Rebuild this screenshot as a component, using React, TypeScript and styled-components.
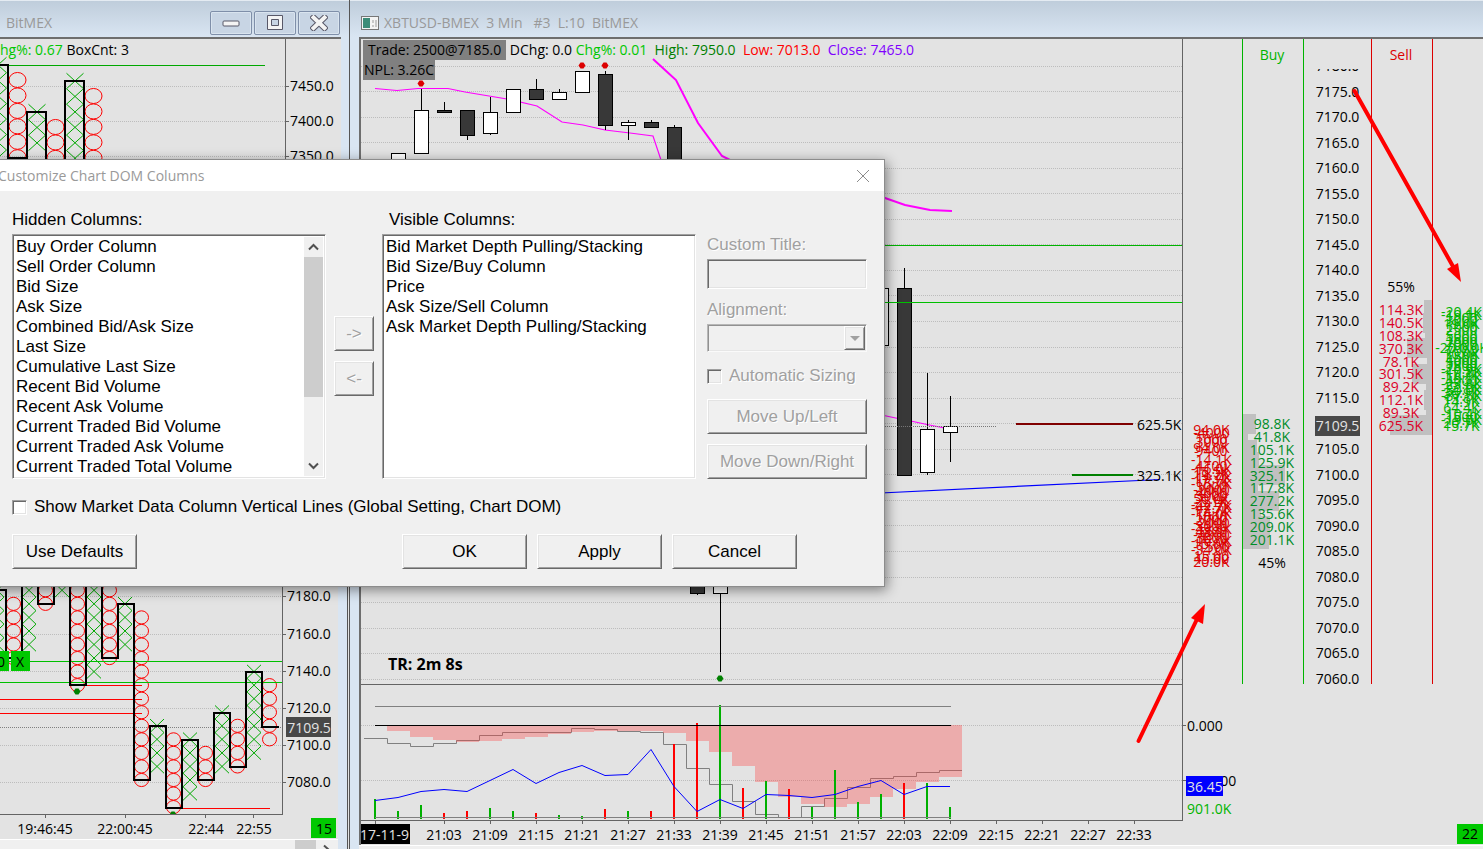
import React from "react";
import styled, { createGlobalStyle, css } from "styled-components";

const UI = `"Open Sans", "Noto Sans", sans-serif`;
const CLASSIC = `"Liberation Sans", Arial, sans-serif`;

const GlobalStyle = createGlobalStyle`
  *, *::before, *::after { box-sizing: border-box; }
  body { margin: 0; background: #e3e3e3; font-family: ${UI}; font-size: 14px; color: #000; }
  ul { list-style: none; margin: 0; padding: 0; }
`;

/* ---------- shell ---------- */

const Desktop = styled.main`
  position: relative;
  display: flex;
  height: 100vh;
  overflow: hidden;
`;

const LeftStack = styled.div`
  display: flex;
  flex-direction: column;
  flex: 0 0 350px;
  border-right: 1px solid #555;
`;

const Pane = styled.section<{ $side?: "top" | "bottom" }>`
  display: flex;
  flex-direction: column;
  min-height: 0;
  overflow: hidden;
  background: #d9e5f2;
  ${(p) => p.$side === "top" && css`flex: 1; padding-right: 8px;`}
  ${(p) =>
    p.$side === "bottom" &&
    css`
      flex: 0 0 449px;
      margin-right: 1px;
      padding-right: 9px;
      border-right: 1px solid #555;
    `}
  ${(p) => !p.$side && css`flex: 1; min-width: 0; padding-left: 9px;`}
`;

const TitleBar = styled.header<{ $lead?: boolean }>`
  display: flex;
  align-items: center;
  gap: 4px;
  flex: 0 0 37px;
  margin: 0 -9px;
  padding: 7px 10px 0 ${(p) => (p.$lead ? 10 : 15)}px;
  border-top: 1px solid #e4ebf2;
  background: linear-gradient(#bfcddb, #d9e5f2);
`;

const TitleText = styled.h1`
  margin: 0;
  flex: 1;
  font-size: 14px;
  line-height: 20px;
  font-weight: 400;
  color: #999;
  white-space: pre;
`;

const CaptionButtons = styled.div`
  display: flex;
  gap: 2px;
`;

const CaptionButton = styled.button`
  display: grid;
  place-items: center;
  width: 42px;
  height: 24px;
  padding: 0;
  border: 1px solid #7f8fa9;
  border-radius: 2px;
  background: #c8d5e4;
  box-shadow: inset 0 0 0 1px #d9e4ef;
`;

const Client = styled.div`
  position: relative;
  flex: 1;
  min-height: 0;
  overflow: hidden;
  border-top: 2px solid #6e6e6e;
  background: #e3e3e3;
`;

const Drawing = styled.svg`
  display: block;
  width: 100%;
  height: 100%;
  font-family: ${UI};
  font-size: 14px;
`;

const StatusLine = styled.p<{ $inset?: boolean }>`
  position: absolute;
  top: 1px;
  left: ${(p) => (p.$inset ? 2 : 0)}px;
  margin: 0;
  line-height: 20px;
  white-space: pre;
`;

const Tint = styled.span<{ $c: string }>`
  color: ${(p) => p.$c};
`;

const Chip = styled.span<{ $wide?: boolean }>`
  display: inline-block;
  padding: 0 ${(p) => (p.$wide ? 5 : 1)}px;
  background: #808080;
`;

const HScroll = styled.div`
  display: flex;
  justify-content: flex-end;
  flex: 0 0 10px;
  border-top: 1px solid #fff;
  background: #f0f0f0;
  overflow: hidden;
`;

const HThumb = styled.div`
  width: 21px;
  background: #cdcdcd;
`;

const HArrow = styled.svg`
  width: 22px;
  height: 17px;
`;

/* ---------- right window ---------- */

const ChartGrid = styled(Client)`
  display: grid;
  grid-template-columns: minmax(0, 1fr) 301px;
  grid-template-rows: minmax(0, 1fr) 137px 24px;
  border-left: 2px solid #6e6e6e;
`;

const Cell = styled.div<{ $line?: boolean }>`
  position: relative;
  min-width: 0;
  min-height: 0;
  overflow: hidden;
  ${(p) => p.$line && css`border-left: 1px solid #646464;`}
`;

const Countdown = styled.strong`
  position: absolute;
  left: 27px;
  bottom: 10px;
  font-size: 16px;
  line-height: 20px;
`;

const Ladder = styled(Cell)`
  display: grid;
  grid-template-columns: 60px 61px 68px 61px 1fr;
`;

const Column = styled.div<{ $rule?: string }>`
  position: relative;
  display: flex;
  flex-direction: column;
  min-width: 0;
  overflow: hidden;
  text-align: center;
  ${(p) => p.$rule && css`border-right: 1px solid ${p.$rule};`}
`;

const Heading = styled.div<{ $c?: string }>`
  flex: 0 0 30px;
  padding: 6px 2px 0 0;
  line-height: 20px;
  color: ${(p) => p.$c};
`;

const PriceView = styled.div`
  flex: 1;
  min-height: 0;
  overflow: hidden;
`;

const PriceList = styled.ul`
  display: flex;
  flex-direction: column;
  height: 638px;
  margin-top: -16px;
`;

const PriceRow = styled.li`
  position: relative;
  display: flex;
  flex: 1;
  align-items: center;
  justify-content: center;
`;

const LastPrice = styled.span`
  position: absolute;
  top: 6px;
  left: 11px;
  width: 45px;
  line-height: 20px;
  background: #484848;
  color: #e3e3e3;
`;

const Sizes = styled.ul<{ $top: number; $c: string }>`
  display: flex;
  flex-direction: column;
  height: 128px;
  margin-top: ${(p) => p.$top}px;
  color: ${(p) => p.$c};
`;

const SizeRow = styled.li`
  position: relative;
  display: flex;
  flex: 1;
  align-items: center;
  justify-content: center;
  padding-right: 2px;
  line-height: 12px;
  white-space: nowrap;
`;

const DepthBar = styled.i<{ $right?: boolean }>`
  position: absolute;
  top: -4px;
  height: 20px;
  background: #c0c0c0;
  ${(p) => (p.$right ? "right: 0;" : "left: 0;")}
`;

const SizeText = styled.span`
  position: relative;
  z-index: 1;
`;

const Share = styled.div<{ $top: number }>`
  margin-top: ${(p) => p.$top}px;
  padding-right: 2px;
  line-height: 20px;
`;

const Stack = styled.ul<{ $top: number; $c: string }>`
  display: flex;
  flex-direction: column;
  align-items: center;
  width: 57px;
  margin-top: ${(p) => p.$top}px;
  color: ${(p) => p.$c};
`;

const StackRow = styled.li`
  flex: 0 0 3px;
  height: 3px;
  line-height: 3px;
  white-space: nowrap;
`;

const AxisTag = styled.span<{ $bg: string }>`
  position: absolute;
  top: 3px;
  right: 0;
  padding: 0 5px;
  line-height: 20px;
  background: ${(p) => p.$bg};
`;

const BottomEdge = styled.div`
  flex: 0 0 4px;
  border-top: 1px solid #fff;
  background: #f0f0f0;
`;

const Arrows = styled.svg`
  position: absolute;
  inset: 0;
  width: 100%;
  height: 100%;
  pointer-events: none;
`;

/* ---------- dialog ---------- */

const Dialog = styled.section`
  position: absolute;
  top: 159px;
  left: -8px;
  width: 893px;
  border: 1px solid #8c8c8c;
  background: #f0f0f0;
  box-shadow: 2px 3px 12px rgba(0, 0, 0, 0.45);
  font-family: ${CLASSIC};
  font-size: 17px;
  line-height: 20px;
`;

const DialogTitle = styled.header`
  display: flex;
  align-items: center;
  justify-content: space-between;
  height: 31px;
  padding: 0 14px 0 5px;
  background: #fff;
  font-family: ${UI};
  font-size: 14px;
  color: #999;
`;

const CloseButton = styled.button`
  display: grid;
  width: 14px;
  height: 14px;
  padding: 0;
  border: 0;
  background: none;
`;

const DialogBody = styled.div`
  padding: 19px 17px 17px 19px;
`;

const Fields = styled.div`
  display: grid;
  grid-template-columns: 314px 40px 314px 160px;
  column-gap: 8px;
`;

const ListGroup = styled.div`
  display: flex;
  flex-direction: column;
  gap: 4px;
`;

const ListLabel = styled.div<{ $indent?: boolean }>`
  padding-left: ${(p) => (p.$indent ? 7 : 0)}px;
`;

const sunken = css`
  border: 1px solid;
  border-color: #a0a0a0 #fff #fff #a0a0a0;
  box-shadow: inset 1px 1px 0 #696969, inset -1px -1px 0 #e3e3e3;
`;

const ListBox = styled.div`
  display: flex;
  height: 245px;
  padding: 2px;
  background: #fff;
  ${sunken}
`;

const Items = styled.ul`
  flex: 1;
  padding-left: 1px;
  overflow: hidden;
  white-space: nowrap;
`;

const VScroll = styled.div`
  display: flex;
  flex-direction: column;
  width: 19px;
  background: #f0f0f0;
`;

const ScrollButton = styled.button`
  display: grid;
  place-items: center;
  height: 20px;
  padding: 0;
  border: 0;
  background: none;
`;

const VThumb = styled.div`
  height: 140px;
  margin-bottom: auto;
  background: #cdcdcd;
`;

const MoveGroup = styled.div`
  display: flex;
  flex-direction: column;
  gap: 10px;
  padding-top: 106px;
`;

const Options = styled.div`
  display: flex;
  flex-direction: column;
  padding: 25px 0 0 3px;
  width: 163px;
  color: #a0a0a0;
  text-shadow: 1px 1px 0 #fff;
`;

const TextBox = styled.input`
  height: 30px;
  margin: 4px 0 11px;
  background: #f0f0f0;
  ${sunken}
`;

const SelectWrap = styled.div`
  position: relative;
  height: 28px;
  margin: 4px 0 14px;
`;

const Select = styled.select`
  appearance: none;
  width: 100%;
  height: 28px;
  border-radius: 0;
  background: #f0f0f0;
  ${sunken}
`;

const raised = css`
  border: 1px solid;
  border-color: #fff #696969 #696969 #fff;
  box-shadow: inset 1px 1px 0 #e3e3e3, inset -1px -1px 0 #a0a0a0;
`;

const SelectArrow = styled.span`
  position: absolute;
  top: 2px;
  right: 2px;
  display: grid;
  place-items: center;
  width: 21px;
  height: 24px;
  background: #f0f0f0;
  pointer-events: none;
  ${raised}
`;

const CheckLabel = styled.label`
  display: flex;
  align-items: center;
  gap: 7px;
  white-space: nowrap;
`;

const CheckBox = styled.input`
  appearance: none;
  flex: none;
  width: 15px;
  height: 15px;
  margin: 0;
  background: #fff;
  ${sunken}
  &:disabled { background: #f0f0f0; }
`;

const PushButton = styled.button<{ $wide?: boolean }>`
  width: ${(p) => (p.$wide ? "125px" : "auto")};
  height: 35px;
  padding: 0;
  background: #f0f0f0;
  font: inherit;
  color: #000;
  ${raised}
  &:disabled { color: #a0a0a0; text-shadow: 1px 1px 0 #fff; }
`;

const MovePair = styled.div`
  display: flex;
  flex-direction: column;
  gap: 10px;
  margin-top: 13px;
`;

const GlobalRow = styled.div`
  margin: 18px 0 17px;
`;

const Footer = styled.footer`
  display: flex;
  gap: 10px;
  padding-right: 70px;
  & > :first-child { margin-right: auto; }
`;

/* ---------- data ---------- */

const range = (n: number) => Array.from({ length: n }, (_, i) => i);

const hidden = [
  "Buy Order Column", "Sell Order Column", "Bid Size", "Ask Size", "Combined Bid/Ask Size", "Last Size",
  "Cumulative Last Size", "Recent Bid Volume", "Recent Ask Volume", "Current Traded Bid Volume",
  "Current Traded Ask Volume", "Current Traded Total Volume",
];
const visible = [
  "Bid Market Depth Pulling/Stacking", "Bid Size/Buy Column", "Price", "Ask Size/Sell Column",
  "Ask Market Depth Pulling/Stacking",
];

const bids = [98.8, 41.8, 105.1, 125.9, 325.1, 117.8, 277.2, 135.6, 209.0, 201.1];
const asks = [114.3, 140.5, 108.3, 370.3, 78.1, 301.5, 89.2, 112.1, 89.3, 625.5];

const bidStack = [
  "94.0K", "-4000", "", "1000", "3000", "", "94.0K", "9400", "", "", "-14.1K", "", "4100", "-16.0K", "15.5K", "19.7K",
  "-19.7K", "17.1K", "-15.7K", "3000", "-2000", "4000", "3000", "50.0K", "-5.1K", "-42.7K", "-42.7K", "17.7K",
  "-14.0K", "1000", "2000", "-2000", "3000", "-43.8K", "4800", "-4800", "3000", "-16.0K", "15.0K", "-1500", "-34.0K",
  "", "15.00", "45.00", "20.0K",
];
const askStack = [
  "-20.4K", "-19.1K", "1000", "3000", "19.0K", "1000", "2500", "", "5000", "1800", "2000", "7000", "-20.0.0K", "7000",
  "10.0K", "1500", "4000", "5000", "1800", "-20.9K", "-10.8K", "17.7K", "-19.1K", "4000", "-23.8K", "13.1K",
  "-30.0K", "36.9K", "-37.5K", "13.1K", "14.9K", "", "64.4K", "", "-10.4K", "1500", "-19.0K", "20.7K", "15.7K",
];

type Box = { x: number; from: number; to: number; kind: "x" | "o" };

const upperBoxes: Box[] = [
  { x: -2, from: 65, to: 165, kind: "x" }, { x: 17, from: 80, to: 165, kind: "o" },
  { x: 37, from: 112, to: 150, kind: "x" }, { x: 55, from: 127, to: 165, kind: "o" },
  { x: 75, from: 81, to: 165, kind: "x" }, { x: 93, from: 96, to: 165, kind: "o" },
];

const lowerBoxes: Box[] = (
  [
    [-3, -4, 2, "x"], [13, -1, 3, "o"], [29, -4, 2, "x"], [45, -4, -1, "o"], [62, -4, -2, "x"], [77, -4, 5, "o"],
    [94, -4, 4, "x"], [109, -4, 3, "o"], [125, -1, 2, "x"], [141, 0, 12, "o"], [157, 8, 11, "x"], [173, 9, 14, "o"],
    [190, 9, 13, "x"], [205, 10, 12, "o"], [222, 7, 11, "x"], [237, 8, 11, "o"], [254, 4, 10, "x"], [269, 5, 9, "o"],
  ] as [number, number, number, "x" | "o"][]
).map(([x, a, b, kind]) => ({ x, from: 617.4 + a * 13.55, to: 617.4 + b * 13.55 + 1, kind }));

/* x, high, body top, body bottom, low, filled */
const candles: [number, number, number, number, number, boolean][] = [
  [398, 153, 153, 175, 175, false], [421, 89, 110, 153, 153, false], [444, 102, 110, 112, 112, true],
  [467, 110, 110, 135, 140, true], [490, 97, 112, 133, 135, false], [513, 89, 89, 112, 112, false],
  [536, 79, 89, 99, 99, true], [559, 89, 92, 99, 99, false], [582, 71, 71, 92, 92, false],
  [605, 71, 74, 125, 130, true], [628, 120, 122, 125, 140, false], [651, 120, 122, 127, 127, true],
  [674, 125, 127, 200, 200, true], [697, 560, 560, 593, 595, true], [720, 560, 560, 593, 672, false],
  [881, 288, 288, 345, 345, false], [904, 268, 288, 475, 475, true], [927, 373, 429, 472, 475, false],
  [950, 396, 426, 432, 462, false],
];

const areaBottoms = [
  731, 737, 740, 742, 741, 739, 737, 734, 732, 731, 731, 731, 733, 741, 752, 766, 782, 797, 804, 807, 804, 797, 789,
  782, 777,
];
const oscillator = [
  800, 797, 791, 789, 791, 780, 769, 783, 772, 765, 775, 774, 749, 786, 811, 799, 808, 794, 795, 797, 794, 786, 780,
  794, 786, 786,
];
const volume: [number, "g" | "r"][] = [
  [799, "g"], [811, "g"], [805, "g"], [813, "r"], [811, "r"], [808, "g"], [811, "g"], [813, "r"], [815, "g"],
  [816, "g"], [809, "r"], [811, "g"], [811, "r"], [744, "r"], [723, "r"], [705, "g"], [788, "r"], [781, "g"],
  [789, "r"], [807, "g"], [770, "g"], [802, "g"], [794, "g"], [783, "r"], [783, "g"], [807, "g"],
];
const times = [
  "21:03", "21:09", "21:15", "21:21", "21:27", "21:33", "21:39", "21:45", "21:51", "21:57", "22:03", "22:09", "22:15",
  "22:21", "22:27", "22:33",
];

/* ---------- drawing helpers ---------- */

const Dotted = ({ y, x2, c = "#bdbdbd" }: { y: number; x2: number | string; c?: string }) => (
  <line x1="0" x2={x2} y1={y + 0.5} y2={y + 0.5} stroke={c} strokeDasharray="1 1" shapeRendering="crispEdges" />
);

const Diamond = ({ x, y, c }: { x: number; y: number; c: string }) => (
  <path d={`M${x - 3.5} ${y + 0.5}l2-3h3l2 3-2 3h-3z`} fill={c} />
);

const BoxColumns = ({ boxes, step, rx }: { boxes: Box[]; step: number; rx: number }) => (
  <>
    {boxes.map((b) =>
      range(Math.floor((b.to - b.from) / step) + 1).map((i) => {
        const y = b.from + i * step;
        const h = step / 2;
        return b.kind === "o" ? (
          <ellipse key={`${b.x}-${i}`} cx={b.x + 0.5} cy={y} rx={rx} ry={h - 0.2} fill="none" stroke="#f00" />
        ) : (
          <path
            key={`${b.x}-${i}`}
            d={`M${b.x - rx} ${y - h}l${rx * 2} ${step}m0 ${-step}l${-rx * 2} ${step}`}
            stroke="#00a800"
          />
        );
      })
    )}
  </>
);

const UpperFigure = () => (
  <Drawing aria-label="Point and figure chart">
    <g transform="translate(0 -39)">
      {[86, 121, 156].map((y, i) => (
        <g key={y}>
          <Dotted y={y} x2={285} />
          <path d={`M286 ${y + 0.5}h3`} stroke="#646464" />
          <text x="290" y={y + 5}>{["7450.0", "7400.0", "7350.0"][i]}</text>
        </g>
      ))}
      <path d="M285.5 39V400" stroke="#646464" />
      <BoxColumns boxes={upperBoxes} step={15.45} rx={8.5} />
      <path d="M0 65.5H265" stroke="#00a800" />
      <path d="M0 65H8V158H27V112H46V180M65 180V81H84V180" fill="none" stroke="#000" strokeWidth="2" />
    </g>
  </Drawing>
);

const LowerFigure = () => (
  <Drawing aria-label="Point and figure chart, detail">
    <defs>
      <clipPath id="lowerPlot"><rect x="0" y="439" width="282" height="375" /></clipPath>
    </defs>
    <g transform="translate(0 -439)">
      {[596, 634, 671, 708, 745, 782].map((y, i) => (
        <g key={y}>
          <Dotted y={y} x2={282} />
          <path d={`M283 ${y + 0.5}h3`} stroke="#646464" />
          <text x="287" y={y + 5}>{(7180 - i * 20).toFixed(1)}</text>
        </g>
      ))}
      <Dotted y={727} x2={282} c="#808080" />
      <g clipPath="url(#lowerPlot)">
        <BoxColumns boxes={lowerBoxes} step={13.55} rx={7} />
        <path d="M86 685.5H142M0 699.5H142M0 713.5H142M173 808.5H270" stroke="#f00" />
        <path d="M0 661.5H282M0 682.5H282" stroke="#00c000" />
        <path
          d="M0 590H6V658H22V560M38 560V604H54V560M70 560V685H86V560M102 560V658H118V604H134V780H150V726H166V808H182V740H198V780H214V713H230V767H246V672H262V727H279"
          fill="none" stroke="#000" strokeWidth="2"
        />
        <Diamond x={77} y={691} c="#008000" />
        <Diamond x={173} y={814} c="#008000" />
      </g>
      <path d="M282.5 439V814.5M0 814.5H283M45.5 815v3M125.5 815v3M205.5 815v3M253.5 815v3" stroke="#646464" fill="none" />
      <g textAnchor="middle">
        <text x="45" y="834">19:46:45</text>
        <text x="125" y="834">22:00:45</text>
        <text x="206" y="834">22:44</text>
        <text x="254" y="834">22:55</text>
        <rect x="0" y="651" width="9" height="20" fill="#00c800" />
        <rect x="11" y="651" width="19" height="20" fill="#00c800" />
        <text x="1" y="667">0</text>
        <text x="20" y="667">X</text>
        <rect x="286" y="717" width="45" height="20" fill="#484848" />
        <text x="309" y="733" fill="#e3e3e3">7109.5</text>
        <rect x="311" y="818" width="25" height="20" fill="#00c800" />
        <text x="324" y="834">15</text>
      </g>
    </g>
  </Drawing>
);

const CandleChart = () => (
  <Drawing aria-label="Candlestick chart">
    <g transform="translate(0 -39)">
      {range(25).map((i) => <Dotted key={i} y={66 + Math.floor(i * 25.55)} x2="100%" />)}
      <line x1="0" x2="100%" y1="245.5" y2="245.5" stroke="#00b400" />
    </g>
    <g transform="translate(-361 -39)" fill="none">
      <path
        d="M375 88.5L397 90.5L418 88.5H448L465 92L483 95L507 99L537 106L562 122L583 125L605 130L630 133L653 136L661 160L674 200M860 411L884 415.5L898 418.5L913 421.5L927 424.5L947 428.5"
        stroke="#f0f" strokeWidth="1.2"
      />
      <path d="M653 59L665 70L676 80L698 123L722 156L732 161M860 189L885 198L905 205L930 210L952 211" stroke="#f0f" strokeWidth="2" />
      <path d="M860 494L1160 479.5" stroke="#00f" strokeWidth="1.2" />
      {candles.map(([x, hi, top, bottom, lo, filled]) => (
        <g key={x} stroke="#000" shapeRendering="crispEdges">
          <path d={`M${x + 0.5} ${hi}V${lo}`} />
          <rect x={x - 6.5} y={top + 0.5} width="14" height={bottom - top} fill={filled ? "#383838" : "#fff"} />
        </g>
      ))}
      <path d="M361 426.5H996" stroke="#777" strokeDasharray="1 1" />
      <Diamond x={421} y={83} c="#dc0000" />
      <Diamond x={582} y={65} c="#dc0000" />
      <Diamond x={605} y={65} c="#dc0000" />
      <Diamond x={720} y={678} c="#008000" />
      <path d="M1016 424H1133" stroke="#800000" strokeWidth="2" />
      <path d="M1072 475H1133" stroke="#008000" strokeWidth="2" />
      <g fill="#000">
        <text x="1137" y="430">625.5K</text>
        <text x="1137" y="481">325.1K</text>
      </g>
    </g>
    <line x1="0" x2="100%" y1="263.5" y2="263.5" stroke="#00c000" />
  </Drawing>
);

const areaPath =
  "M387 725" + areaBottoms.map((y, i) => `V${y}H${387 + (i + 1) * 23}`).join("") + "V725Z";

const Indicator = () => (
  <Drawing aria-label="Volume and oscillator">
    <g transform="translate(0 -684)">
      <Dotted y={725} x2="100%" />
      <Dotted y={780} x2="100%" />
    </g>
    <g transform="translate(-361 -684)" fill="none">
      <path
        d="M364 738.5H387.5V743.5H410.5V746.5H433.5V743.5H456.5V740.5H479.5V735.5H502.5V732.5H571.5V728.5H594.5V729.5H617.5V731.5H640.5V732.5H663.5V744.5H686.5V768.5H709.5V784.5H732.5V801.5H755.5V814.5H778.5V817.5H801.5V806.5H824.5V798.5H847.5V787.5H870.5V778.5H893.5V776.5H916.5V772.5H939.5V770.5H962"
        stroke="#808080"
      />
      <path d={areaPath} fill="rgba(255, 60, 60, 0.33)" />
      {volume.map(([y, c], i) => (
        <path key={i} d={`M${375 + i * 23} ${y}V819`} stroke={c === "g" ? "#00b000" : "#f00"} strokeWidth="2" />
      ))}
      <path d="M375 706.5H951M375 817.5H951" stroke="#808080" />
      <path d="M375 725.5H951" stroke="#000" />
      <polyline points={oscillator.map((y, i) => `${375 + i * 23},${y + 0.5}`).join(" ")} stroke="#00f" />
    </g>
    <line x1="0" x2="100%" y1="136.5" y2="136.5" stroke="#646464" />
    <line x1="0" x2="100%" y1="0" y2="0" stroke="#646464" strokeWidth="2" />
  </Drawing>
);

const TimeAxis = () => (
  <Drawing aria-label="Time axis">
    {times.map((t, i) => (
      <g key={t}>
        <path d={`M${83.5 + i * 46} 0v3`} stroke="#646464" />
        <text x={83 + i * 46} y="19" textAnchor="middle">{t}</text>
      </g>
    ))}
    <path d="M14.5 0v3" stroke="#646464" />
    <rect x="0" y="3" width="49" height="20" />
    <text x="48" y="19" textAnchor="end" fill="#e3e3e3">17-11-9</text>
  </Drawing>
);

const ValueAxis = () => (
  <Drawing aria-label="Value axis">
    <path d="M0 41.5h3M0 96.5h3" stroke="#646464" />
    <text x="4" y="47">0.000</text>
    <text x="5" y="102">-40.000</text>
    <rect x="3" y="92" width="37" height="20" fill="#00f" />
    <text x="4" y="108" fill="#e3e3e3">36.45</text>
    <text x="4" y="130" fill="#00b400">901.0K</text>
  </Drawing>
);

const SizeColumn = ({ values, right, top, c }: { values: number[]; right?: boolean; top: number; c: string }) => {
  const max = Math.max(...values);
  return (
    <Sizes $top={top} $c={c}>
      {values.map((v) => (
        <SizeRow key={v}>
          <DepthBar $right={right} style={{ width: Math.round((v / max) * 42) }} />
          <SizeText>{v.toFixed(1)}K</SizeText>
        </SizeRow>
      ))}
    </Sizes>
  );
};

const Chevron = ({ down }: { down?: boolean }) => (
  <svg width="11" height="8" viewBox="0 0 11 8" fill="none" stroke="#505050" strokeWidth="2">
    <path d={down ? "M1 1.5l4.5 4.5 4.5-4.5" : "M1 6.5l4.5-4.5 4.5 4.5"} />
  </svg>
);

/* ---------- page ---------- */

export default function App() {
  return (
    <Desktop>
      <GlobalStyle />
      <LeftStack>
        <Pane $side="top">
          <TitleBar>
            <TitleText>BitMEX</TitleText>
            <CaptionButtons>
              <CaptionButton aria-label="Minimize">
                <svg width="18" height="8"><rect x="1" y="2" width="16" height="5" rx="1" fill="#f4f4f4" stroke="#585868" /></svg>
              </CaptionButton>
              <CaptionButton aria-label="Maximize">
                <svg width="18" height="16" fill="#f4f4f4" stroke="#585868">
                  <path fillRule="evenodd" d="M1.5.5h15v14h-15zM5.5 4.5v6h7v-6z" />
                </svg>
              </CaptionButton>
              <CaptionButton aria-label="Close">
                <svg width="18" height="16" fill="none">
                  <path d="M3.5 2.5l11 10.500M14.5 2.5l-11 10.500" stroke="#585868" strokeWidth="6" strokeLinecap="square" />
                  <path d="M3.5 2.5l11 10.500M14.5 2.5l-11 10.500" stroke="#f4f4f4" strokeWidth="4" strokeLinecap="square" />
                </svg>
              </CaptionButton>
            </CaptionButtons>
          </TitleBar>
          <Client>
            <UpperFigure />
            <StatusLine><Tint $c="#00c800">hg%: 0.67</Tint> BoxCnt: 3</StatusLine>
          </Client>
        </Pane>
        <Pane $side="bottom">
          <TitleBar />
          <Client><LowerFigure /></Client>
          <HScroll>
            <HThumb />
            <HArrow><path d="M8 5.5l5 4.5-5 4.5" fill="none" stroke="#505050" strokeWidth="2" /></HArrow>
          </HScroll>
        </Pane>
      </LeftStack>

      <Pane>
        <TitleBar $lead>
          <svg width="20" height="16">
            <rect x="1.5" y="1.5" width="17" height="13" fill="#f4f4f4" stroke="#777" />
            <rect x="3" y="3" width="7" height="10" fill="#3c8c78" />
            <path d="M12 5h2v3h-2zM15 5h2v7h-2zM12 10h2v2h-2z" fill="#c8c8c8" />
          </svg>
          <TitleText>{"XBTUSD-BMEX  3 Min   #3  L:10  BitMEX"}</TitleText>
        </TitleBar>
        <ChartGrid>
          <Cell>
            <CandleChart />
            <StatusLine $inset>
              <Chip $wide>Trade: 2500@7185.0</Chip>
              {" DChg: 0.0 "}
              <Tint $c="#00c800">{"Chg%: 0.01  "}</Tint>
              <Tint $c="#008000">{"High: 7950.0  "}</Tint>
              <Tint $c="#f00">{"Low: 7013.0  "}</Tint>
              <Tint $c="#8000ff">Close: 7465.0</Tint>
              <br />
              <Chip>NPL: 3.26C</Chip>
            </StatusLine>
            <Countdown>TR: 2m 8s</Countdown>
          </Cell>
          <Ladder $line>
            <Column $rule="#00b400">
              <Stack $top={389} $c="#dc0000">
                {bidStack.map((v, i) => <StackRow key={i}>{v}</StackRow>)}
              </Stack>
            </Column>
            <Column $rule="#00b400">
              <Heading $c="#00b400">Buy</Heading>
              <SizeColumn values={bids} top={349} c="#008c28" />
              <Share $top={7}>45%</Share>
            </Column>
            <Column $rule="#dc0000">
              <Heading />
              <PriceView>
                <PriceList>
                  {range(25).map((i) => {
                    const price = 7180 - i * 5;
                    return (
                      <PriceRow key={price}>
                        {price === 7110 ? <LastPrice>7109.5</LastPrice> : price.toFixed(1)}
                      </PriceRow>
                    );
                  })}
                </PriceList>
              </PriceView>
            </Column>
            <Column $rule="#dc0000">
              <Heading $c="#dc0000">Sell</Heading>
              <Share $top={208}>55%</Share>
              <SizeColumn values={asks} right top={7} c="#dc0028" />
            </Column>
            <Column>
              <Stack $top={271} $c="#00b400">
                {askStack.map((v, i) => <StackRow key={i}>{v}</StackRow>)}
              </Stack>
            </Column>
          </Ladder>
          <Cell><Indicator /></Cell>
          <Cell $line><ValueAxis /></Cell>
          <Cell><TimeAxis /></Cell>
          <Cell><AxisTag $bg="#00c800">22</AxisTag></Cell>
        </ChartGrid>
        <BottomEdge />
      </Pane>

      <Arrows aria-hidden="true" stroke="#f00" fill="#f00">
        <path d="M1138.5 741L1199 615" strokeWidth="4" strokeLinecap="round" />
        <path d="M1205 604L1191 618L1203 624Z" stroke="none" />
        <path d="M1354.5 91L1455 270" strokeWidth="4" strokeLinecap="round" />
        <path d="M1461 282L1447 269L1458 263Z" stroke="none" />
      </Arrows>

      <Dialog role="dialog" aria-label="Customize Chart DOM Columns">
        <DialogTitle>
          <span>Customize Chart DOM Columns</span>
          <CloseButton aria-label="Close">
            <svg width="14" height="14" stroke="#8c8c8c"><path d="M1 1l12 12M13 1L1 13" /></svg>
          </CloseButton>
        </DialogTitle>
        <DialogBody>
          <Fields>
            <ListGroup>
              <ListLabel id="hidden-label">Hidden Columns:</ListLabel>
              <ListBox>
                <Items role="listbox" aria-labelledby="hidden-label">
                  {hidden.map((h) => <li key={h} role="option" aria-selected="false">{h}</li>)}
                </Items>
                <VScroll>
                  <ScrollButton aria-label="Scroll up"><Chevron /></ScrollButton>
                  <VThumb />
                  <ScrollButton aria-label="Scroll down"><Chevron down /></ScrollButton>
                </VScroll>
              </ListBox>
            </ListGroup>
            <MoveGroup>
              <PushButton disabled>-&gt;</PushButton>
              <PushButton disabled>&lt;-</PushButton>
            </MoveGroup>
            <ListGroup>
              <ListLabel id="visible-label" $indent>Visible Columns:</ListLabel>
              <ListBox>
                <Items role="listbox" aria-labelledby="visible-label">
                  {visible.map((v) => <li key={v} role="option" aria-selected="false">{v}</li>)}
                </Items>
              </ListBox>
            </ListGroup>
            <Options>
              <label htmlFor="custom-title">Custom Title:</label>
              <TextBox id="custom-title" disabled />
              <label htmlFor="alignment">Alignment:</label>
              <SelectWrap>
                <Select id="alignment" disabled />
                <SelectArrow>
                  <svg width="10" height="5"><path d="M0 0h10l-5 5z" fill="#a0a0a0" /></svg>
                </SelectArrow>
              </SelectWrap>
              <CheckLabel><CheckBox type="checkbox" disabled />Automatic Sizing</CheckLabel>
              <MovePair>
                <PushButton disabled>Move Up/Left</PushButton>
                <PushButton disabled>Move Down/Right</PushButton>
              </MovePair>
            </Options>
          </Fields>
          <GlobalRow>
            <CheckLabel>
              <CheckBox type="checkbox" />
              Show Market Data Column Vertical Lines (Global Setting, Chart DOM)
            </CheckLabel>
          </GlobalRow>
          <Footer>
            <PushButton $wide>Use Defaults</PushButton>
            <PushButton $wide>OK</PushButton>
            <PushButton $wide>Apply</PushButton>
            <PushButton $wide>Cancel</PushButton>
          </Footer>
        </DialogBody>
      </Dialog>
    </Desktop>
  );
}
